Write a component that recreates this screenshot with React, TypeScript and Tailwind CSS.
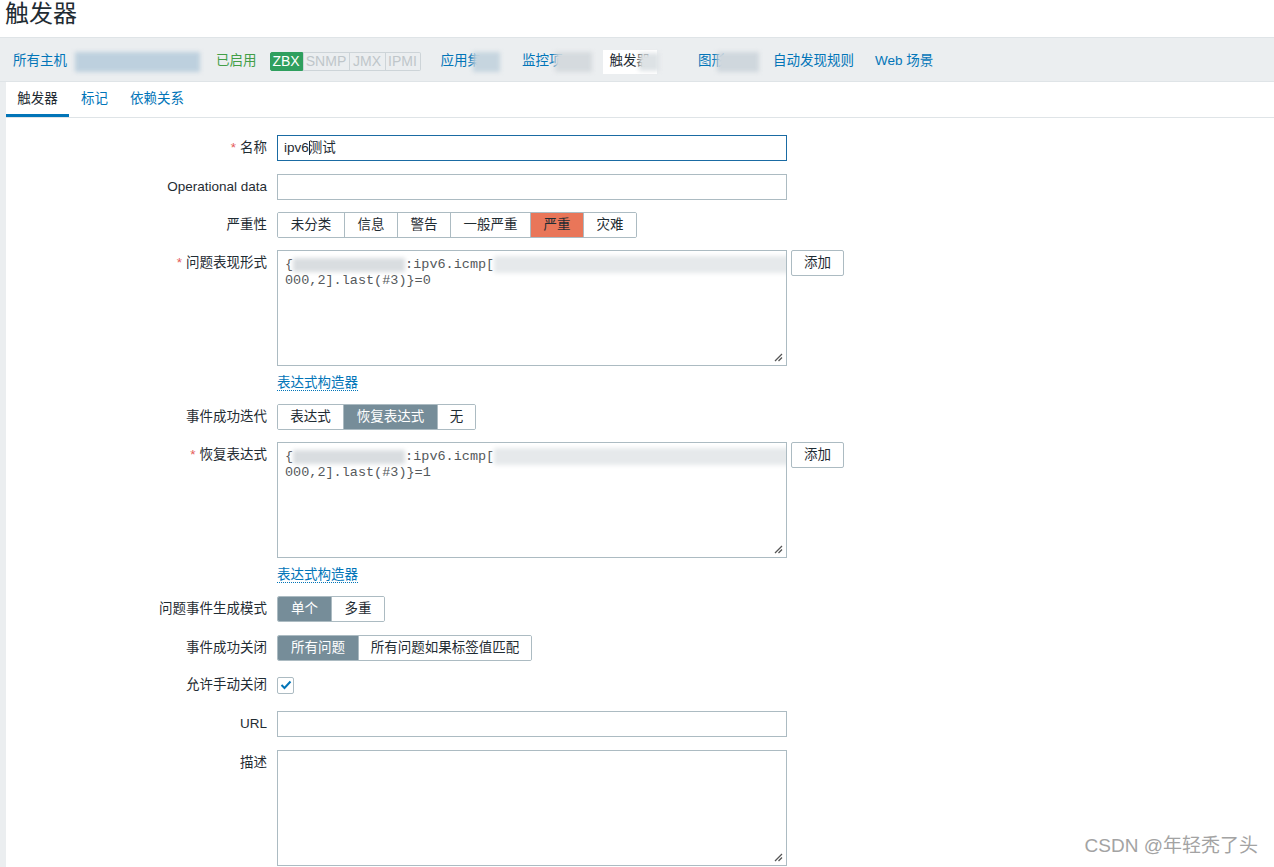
import React from "react";

const font = { fontFamily: '"Liberation Sans", Arial, "Noto Sans CJK SC", sans-serif' };

function Blur({ w, h = 18, color = "bg-[#d3dade]", className = "" }: { w: number; h?: number; color?: string; className?: string }) {
  return <span className={`inline-block shrink-0 align-middle blur-[2px] ${color} ${className}`} style={{ width: w, height: h }} />;
}

function Grip() {
  return (
    <svg className="absolute right-[3px] bottom-[3px]" width="10" height="10" viewBox="0 0 10 10">
      <path d="M9 2 L2 9 M9 5.5 L5.5 9" stroke="#555" strokeWidth="1.3" />
    </svg>
  );
}

function Label({ text, req }: { text: string; req?: boolean }) {
  return (
    <div className="w-[261px] shrink-0 text-right text-[13.5px] leading-[26px] text-[#1f2c33]">
      {req && <span className="mr-[4px] text-[#e45959]">*</span>}
      {text}
    </div>
  );
}

function Row({ label, req, top, children }: { label: string; req?: boolean; top: number; children: React.ReactNode }) {
  return (
    <div className="flex items-start" style={{ marginTop: top }}>
      <Label text={label} req={req} />
      <div className="ml-[10px]">{children}</div>
    </div>
  );
}

function Seg({ items, active, widths, activeClass = "bg-[#768d99] text-white" }: { items: string[]; active: number; widths: number[]; activeClass?: string }) {
  return (
    <div className="flex h-[26px] overflow-hidden rounded-[2px] border border-[#acbbc2]">
      {items.map((it, i) => (
        <div
          key={it}
          style={{ width: widths[i] }}
          className={`flex items-center justify-center text-[13.5px] ${i > 0 ? "border-l border-[#acbbc2]" : ""} ${
            i === active ? activeClass : "bg-white text-[#1f2c33]"
          }`}
        >
          {it}
        </div>
      ))}
    </div>
  );
}

function ExprBox({ last }: { last: string }) {
  return (
    <div className="flex items-start gap-[4px]">
      <div
        className="relative h-[116px] w-[510px] overflow-hidden border border-[#acbbc2] bg-white px-[7px] pt-[5px] text-[13.5px] leading-[15px] text-[#55595c]"
        style={{ fontFamily: '"Liberation Mono", "Courier New", monospace' }}
      >
        <div className="flex items-center whitespace-nowrap">
          {"{"}
          <Blur w={112} h={14} color="bg-[#d9dde0]" />
          <span>:ipv6.icmp[</span>
          <Blur w={330} h={17} color="bg-[#e6e9eb]" />
        </div>
        <div>{`000,2].last(#3)}=${last}`}</div>
        <Grip />
      </div>
      <button className="h-[26px] w-[53px] rounded-[2px] border border-[#acbbc2] bg-white text-[13.5px] text-[#1f2c33]">添加</button>
    </div>
  );
}

function BuilderLink() {
  return (
    <div className="ml-[271px] mt-[8px] h-[17px] text-[13.5px] leading-[17px]">
      <span className="border-b border-dotted border-[#0275b8] text-[#0275b8]">表达式构造器</span>
    </div>
  );
}

export default function App() {
  return (
    <div className="relative h-[867px] overflow-hidden bg-[#ebeef0]" style={font}>
      <div className="h-[37px] bg-white pl-[5px] text-[24px] leading-[28px] text-[#1f2c33]">触发器</div>

      <div className="flex h-[45px] items-center border-y border-[#dfe4e7] bg-[#ebeef0] pl-[13px] pt-[4px] text-[13.5px] text-[#0275b8]">
        <span>所有主机</span>
        <Blur w={125} h={20} color="bg-[#bdd0de]" className="ml-[8px]" />
        <span className="ml-[16px] text-[#429e47]">已启用</span>
        <div className="ml-[13px] flex h-[19px] text-[14px] leading-[17px]">
          <span className="w-[33px] rounded-l-[2px] border border-[#2f9f5e] bg-[#2f9f5e] text-center text-white">ZBX</span>
          <span className="w-[47px] border border-[#cdd4d8] text-center text-[#bfc6ca]">SNMP</span>
          <span className="w-[36px] border-y border-r border-[#cdd4d8] text-center text-[#bfc6ca]">JMX</span>
          <span className="w-[35px] rounded-r-[2px] border-y border-r border-[#cdd4d8] text-center text-[#bfc6ca]">IPMI</span>
        </div>
        <span className="ml-[20px]">应用集</span>
        <Blur w={27} h={20} color="bg-[#c6d5df]" className="-ml-[8px]" />
        <span className="ml-[22px]">监控项</span>
        <Blur w={37} h={20} color="bg-[#d5dade]" className="-ml-[8px]" />
        <span className="ml-[11px] flex h-[24px] items-center bg-white px-[7px] text-[#1f2c33]">触发器</span>
        <Blur w={20} h={18} color="bg-[#dde2e5]" className="-ml-[18px]" />
        <span className="ml-[39px]">图形</span>
        <Blur w={42} h={20} color="bg-[#cfd7dd]" className="-ml-[8px]" />
        <span className="ml-[14px]">自动发现规则</span>
        <span className="ml-[21px]">Web 场景</span>
      </div>

      <div className="ml-[6px] h-full bg-white">
        <div className="flex h-[36px] items-end border-b border-[#dfe4e7] text-[13.5px]">
          <div className="flex h-[35px] w-[63px] items-center justify-center border-b-[3px] border-[#0275b8] pt-[3px] text-[#1f2c33]">触发器</div>
          <div className="flex h-[35px] items-center pl-[12px] text-[#0275b8]">标记</div>
          <div className="flex h-[35px] items-center pl-[22px] text-[#0275b8]">依赖关系</div>
        </div>

        <div className="flex flex-col">
          <Row label="名称" req top={17}>
            <div className="flex h-[26px] w-[510px] items-center border border-[#1a6ba3] bg-white px-[6px] text-[13.5px] text-[#1f2c33]">
              ipv6<span className="-mr-[1px] inline-block h-[14px] w-[1px] bg-[#1f2c33]" />测试
            </div>
          </Row>
          <Row label="Operational data" top={13}>
            <div className="h-[26px] w-[510px] border border-[#acbbc2] bg-white" />
          </Row>
          <Row label="严重性" top={12}>
            <Seg
              items={["未分类", "信息", "警告", "一般严重", "严重", "灾难"]}
              active={4}
              widths={[66, 53, 53, 80, 53, 53]}
              activeClass="bg-[#e97659] text-[#1f2c33]"
            />
          </Row>
          <Row label="问题表现形式" req top={12}>
            <ExprBox last="0" />
          </Row>
          <BuilderLink />
          <Row label="事件成功迭代" top={13}>
            <Seg items={["表达式", "恢复表达式", "无"]} active={1} widths={[65, 94, 38]} />
          </Row>
          <Row label="恢复表达式" req top={12}>
            <ExprBox last="1" />
          </Row>
          <BuilderLink />
          <Row label="问题事件生成模式" top={13}>
            <Seg items={["单个", "多重"]} active={0} widths={[53, 53]} />
          </Row>
          <Row label="事件成功关闭" top={13}>
            <Seg items={["所有问题", "所有问题如果标签值匹配"]} active={0} widths={[80, 173]} />
          </Row>
          <Row label="允许手动关闭" top={11}>
            <div className="flex h-[26px] items-center">
              <div className="flex h-[17px] w-[17px] items-center justify-center rounded-[2px] border border-[#acbbc2] bg-white">
                <svg width="12" height="10" viewBox="0 0 12 10">
                  <path d="M1.5 5 L4.5 8 L10.5 1.5" stroke="#0275b8" strokeWidth="2" fill="none" />
                </svg>
              </div>
            </div>
          </Row>
          <Row label="URL" top={13}>
            <div className="h-[26px] w-[510px] border border-[#acbbc2] bg-white" />
          </Row>
          <Row label="描述" top={13}>
            <div className="relative h-[116px] w-[510px] border border-[#acbbc2] bg-white">
              <Grip />
            </div>
          </Row>
        </div>
      </div>

      <div
        className="absolute bottom-[7px] right-[16px] text-[19px] text-[#a3a3a3]"
        style={{ fontFamily: '"Liberation Sans", "Noto Sans CJK SC", sans-serif', textShadow: "0 0 1px #fff" }}
      >
        CSDN @年轻秃了头
      </div>
    </div>
  );
}
